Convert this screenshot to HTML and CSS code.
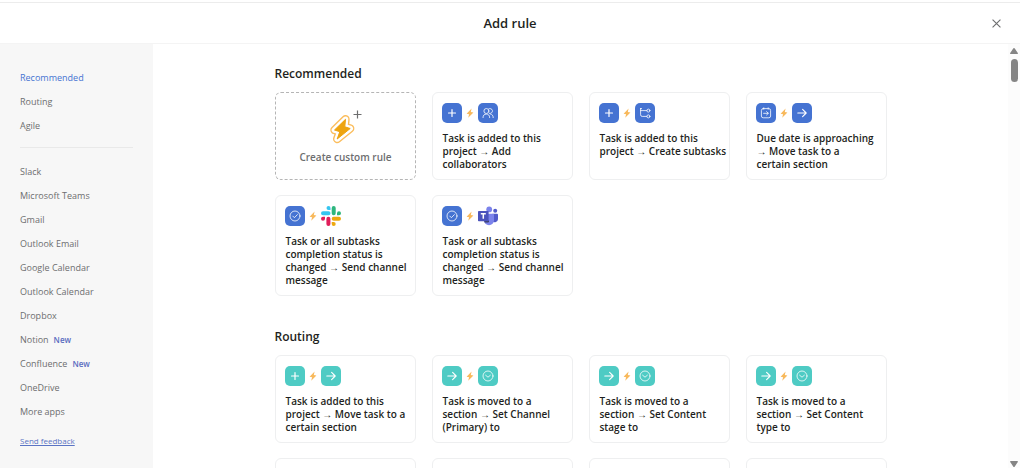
FILE: index.html
```html
<!DOCTYPE html>
<html lang="en">
<head>
<meta charset="utf-8">
<title>Add rule</title>
<link rel="stylesheet" href="styles.css">
</head>
<body>
<svg class="sprite" aria-hidden="true">
  <symbol id="plus" viewBox="0 0 20 20"><path d="M10 6.5v7M6.5 10h7" stroke-width="1.2"/></symbol>
  <symbol id="arrow" viewBox="0 0 20 20"><path d="M5.8 10h8.2M10.6 6.4l3.6 3.6-3.6 3.6" stroke-width="1.1"/></symbol>
  <symbol id="check" viewBox="0 0 20 20"><circle cx="10" cy="10" r="5"/><path d="M7.8 10.1l1.6 1.6 3-3.1"/></symbol>
  <symbol id="chevron" viewBox="0 0 20 20"><circle cx="10" cy="10" r="5"/><path d="M7.6 9.2l2.4 2 2.4-2"/></symbol>
  <symbol id="people" viewBox="0 0 20 20"><circle cx="8.4" cy="8" r="2.5"/><path d="M10.6 5.9a2.5 2.5 0 1 1 .7 4.5M5 14.6c0-2.4 1.3-3.5 3.3-3.5s3.4 1.1 3.4 3.5M12.6 11.1c1.6.2 2.6 1.4 2.6 3.5"/></symbol>
  <symbol id="subtasks" viewBox="0 0 20 20"><path d="M5.6 5.4v6.4q0 1.6 1.6 1.6h4.6M5.6 7.6h6.2M5.6 5.6h1"/><circle cx="13.4" cy="7.6" r="1.5"/><circle cx="13.4" cy="13.4" r="1.5"/></symbol>
  <symbol id="due" viewBox="0 0 20 20"><rect x="5.4" y="5.6" width="9.2" height="9.2" rx="1.8"/><path d="M7.8 4.8v1.4M12.2 4.8v1.4M7.6 10.3h4.6M10.6 8.6l1.7 1.7-1.7 1.7"/></symbol>
  <symbol id="bolt" viewBox="0 0 8 10"><path d="M5.6.5L.6 5.7l2.5.6-.9 3.400 5.200-5.200-2.600-.6z"/></symbol>
  <symbol id="slack" viewBox="0 0 20 20">
    <path fill="#36c5f0" d="M7.5 0a2 2 0 0 0 0 4h2V2a2 2 0 0 0-2-2zM7.5 5.3H2a2 2 0 0 0 0 4h5.5a2 2 0 0 0 0-4z"/>
    <path fill="#2eb67d" d="M20 7.3a2 2 0 0 0-4 0v2h2a2 2 0 0 0 2-2zM14.7 7.3V2a2 2 0 0 0-4 0v5.3a2 2 0 0 0 4 0z"/>
    <path fill="#eda810" d="M12.7 20a2 2 0 0 0 0-4h-2v2a2 2 0 0 0 2 2zM12.7 14.7H18a2 2 0 0 0 0-4h-5.3a2 2 0 0 0 0 4z"/>
    <path fill="#e01e5a" d="M0 12.7a2 2 0 0 0 4 0v-2H2a2 2 0 0 0-2 2zM5.4 12.7V18a2 2 0 0 0 4 0v-5.3a2 2 0 0 0-4 0z"/>
  </symbol>
  <symbol id="teams" viewBox="0 0 20 20">
    <circle cx="17.2" cy="4.8" r="2" fill="#5059c9"/>
    <path fill="#5059c9" d="M14.5 7.8H19q1 0 1 1v4.4a3.2 3.2 0 0 1-5.5 2z"/>
    <circle cx="11.2" cy="3.4" r="2.9" fill="#7b83eb"/>
    <path fill="#7b83eb" d="M7 7.8h8q1 0 1 1v5.4a5 5 0 0 1-10 0V8.8q0-1 1-1z"/>
    <path fill="#3b3f63" d="M6 14.4h5v1.2q0 .8-.8.8H6.6z"/>
    <rect y="5" width="10.6" height="10.2" rx=".8" fill="#4b53bc"/>
    <path fill="none" stroke="#fff" stroke-width="1.5" d="M2.8 7.7h5M5.3 7.7v5"/>
  </symbol>
</svg>

<header class="header">
  <h1 class="title">Add rule</h1>
  <button class="close" aria-label="Close"><svg class="close-icon" viewBox="0 0 8 8"><path d="M.5.5l7 7M7.5.5l-7 7"/></svg></button>
</header>

<div class="body">
  <nav class="sidebar" aria-label="Rule categories">
    <ul class="menu menu-top">
      <li><a class="link active" href="#recommended">Recommended</a></li>
      <li><a class="link" href="#routing">Routing</a></li>
      <li><a class="link" href="#agile">Agile</a></li>
    </ul>
    <ul class="menu">
      <li><a class="link" href="#slack-apps">Slack</a></li>
      <li><a class="link" href="#teams-apps">Microsoft Teams</a></li>
      <li><a class="link" href="#gmail">Gmail</a></li>
      <li><a class="link" href="#outlook-email">Outlook Email</a></li>
      <li><a class="link" href="#google-calendar">Google Calendar</a></li>
      <li><a class="link" href="#outlook-calendar">Outlook Calendar</a></li>
      <li><a class="link" href="#dropbox">Dropbox</a></li>
      <li><a class="link" href="#notion">Notion<span class="new">New</span></a></li>
      <li><a class="link" href="#confluence">Confluence<span class="new">New</span></a></li>
      <li><a class="link" href="#onedrive">OneDrive</a></li>
      <li><a class="link" href="#more">More apps</a></li>
    </ul>
    <a class="feedback" href="#feedback">Send feedback</a>
  </nav>

  <main class="main">
    <section class="section" id="recommended">
      <h2 class="heading">Recommended</h2>
      <div class="grid">
        <button class="card custom">
          <svg class="custom-icon" viewBox="0 0 34 38">
            <path class="halo" d="M17.5 12.3L6.5 23l5.3 1.7L9.2 32l13-10.5-5.4-1.7z"/>
            <path class="gap" d="M17.5 12.3L6.5 23l5.3 1.7L9.2 32l13-10.5-5.4-1.7z"/>
            <path class="flash" d="M17.5 12.3L6.5 23l5.3 1.7L9.2 32l13-10.5-5.4-1.7z"/>
            <path class="add" d="M29.5 3.5v8M25.5 7.5h8"/>
          </svg>
          <span class="custom-label">Create custom rule</span>
        </button>
        <button class="card blue">
          <span class="icons"><svg class="tile"><use href="#plus"/></svg><svg class="bolt"><use href="#bolt"/></svg><svg class="tile"><use href="#people"/></svg></span>
          <span class="text">Task is added to this project → Add collaborators</span>
        </button>
        <button class="card blue">
          <span class="icons"><svg class="tile"><use href="#plus"/></svg><svg class="bolt"><use href="#bolt"/></svg><svg class="tile"><use href="#subtasks"/></svg></span>
          <span class="text">Task is added to this<br>project → Create subtasks</span>
        </button>
        <button class="card blue">
          <span class="icons"><svg class="tile"><use href="#due"/></svg><svg class="bolt"><use href="#bolt"/></svg><svg class="tile"><use href="#arrow"/></svg></span>
          <span class="text">Due date is approaching<br>→ Move task to a<br>certain section</span>
        </button>
        <button class="card blue">
          <span class="icons"><svg class="tile"><use href="#check"/></svg><svg class="bolt"><use href="#bolt"/></svg><svg class="logo"><use href="#slack"/></svg></span>
          <span class="text">Task or all subtasks<br>completion status is changed → Send channel message</span>
        </button>
        <button class="card blue">
          <span class="icons"><svg class="tile"><use href="#check"/></svg><svg class="bolt"><use href="#bolt"/></svg><svg class="logo"><use href="#teams"/></svg></span>
          <span class="text">Task or all subtasks<br>completion status is changed → Send channel message</span>
        </button>
      </div>
    </section>

    <section class="section" id="routing">
      <h2 class="heading">Routing</h2>
      <div class="grid">
        <button class="card teal">
          <span class="icons"><svg class="tile"><use href="#plus"/></svg><svg class="bolt"><use href="#bolt"/></svg><svg class="tile"><use href="#arrow"/></svg></span>
          <span class="text">Task is added to this project → Move task to a certain section</span>
        </button>
        <button class="card teal">
          <span class="icons"><svg class="tile"><use href="#arrow"/></svg><svg class="bolt"><use href="#bolt"/></svg><svg class="tile"><use href="#chevron"/></svg></span>
          <span class="text">Task is moved to a<br>section → Set Channel (Primary) to</span>
        </button>
        <button class="card teal">
          <span class="icons"><svg class="tile"><use href="#arrow"/></svg><svg class="bolt"><use href="#bolt"/></svg><svg class="tile"><use href="#chevron"/></svg></span>
          <span class="text">Task is moved to a<br>section → Set Content<br>stage to</span>
        </button>
        <button class="card teal">
          <span class="icons"><svg class="tile"><use href="#arrow"/></svg><svg class="bolt"><use href="#bolt"/></svg><svg class="tile"><use href="#chevron"/></svg></span>
          <span class="text">Task is moved to a<br>section → Set Content<br>type to</span>
        </button>
        <div class="card"></div>
        <div class="card"></div>
        <div class="card"></div>
        <div class="card"></div>
      </div>
    </section>
  </main>

  <div class="scrollbar" aria-hidden="true">
    <svg class="caret" viewBox="0 0 8 6"><path d="M4 0q.5 0 .8.5L7.8 5q.4 1-.6 1H.8q-1 0-.6-1L3.2.5Q3.5 0 4 0z"/></svg>
    <span class="thumb"></span>
    <svg class="caret down" viewBox="0 0 8 6"><path d="M4 0q.5 0 .8.5L7.8 5q.4 1-.6 1H.8q-1 0-.6-1L3.2.5Q3.5 0 4 0z"/></svg>
  </div>
</div>
</body>
</html>
```
FILE: styles.css
```css
* {
  box-sizing: border-box;
}

body {
  margin: 0;
  height: 100vh;
  display: flex;
  flex-direction: column;
  overflow: hidden;
  background: #fff;
  color: #1e1f21;
  font-family: "Open Sans", "Noto Sans", sans-serif;
  font-size: 10px;
}

button {
  font: inherit;
  color: inherit;
  cursor: pointer;
}

.sprite {
  display: none;
}

.header {
  flex: none;
  display: grid;
  grid-template-columns: 1fr auto 1fr;
  align-items: center;
  margin-top: 2px;
  padding: 10px 19px 10px 0;
  border-top: 1px solid #ececec;
  border-bottom: 1px solid #f4f4f4;
}

.title {
  grid-column: 2;
  margin: 0;
  padding-left: 19px;
  font-size: 13px;
  line-height: 20px;
  font-weight: 600;
}

.close {
  justify-self: end;
  display: flex;
  padding: 0;
  border: 0;
  background: none;
}

.close-icon {
  width: 9px;
  height: 9px;
  fill: none;
  stroke: #6d6e6f;
}

.body {
  flex: 1;
  min-height: 0;
  display: flex;
}

.sidebar {
  flex: 0 0 15%;
  padding: 26px 20px 0;
  background: #f7f7f7;
  overflow: hidden;
}

.menu {
  display: grid;
  gap: 8px;
  margin: 0;
  padding: 0;
  list-style: none;
  line-height: 16px;
}

.menu-top {
  margin-bottom: 16px;
  padding-bottom: 13px;
  border-bottom: 1px solid #e9e9e9;
}

.link {
  display: flex;
  color: #6d6e6f;
  font-size: 9px;
  text-decoration: none;
}

.active {
  color: #4573d2;
}

.new {
  margin-left: 5px;
  color: #5a6cc0;
  font-size: 8px;
  font-weight: 600;
}

.feedback {
  display: inline-block;
  margin-top: 13px;
  color: #5a74c4;
  font-size: 8px;
  line-height: 16px;
}

.main {
  flex: 1;
  min-width: 0;
  padding: 20px 16px 0;
  overflow: hidden;
}

.section {
  max-width: 612px;
  margin: 0 auto 31px;
}

.heading {
  margin: 0 0 8px;
  font-size: 12px;
  line-height: 20px;
  font-weight: 600;
}

.grid {
  display: grid;
  grid-template-columns: repeat(4, minmax(0, 1fr));
  gap: 15px 16px;
}

.card {
  display: flex;
  flex-direction: column;
  gap: 9px;
  min-height: 88px;
  padding: 10px 1px 8px 9px;
  border: 1px solid #eeeff0;
  border-radius: 6px;
  background: #fff;
  text-align: left;
}

.custom {
  align-items: center;
  gap: 6px;
  padding: 14px 9px 8px;
  border: 1px dashed #b5b5b5;
  color: #6d6e6f;
}

.custom-label,
.text {
  padding-left: 1px;
  font-size: 10px;
  line-height: 13px;
  font-weight: 600;
}

.custom-icon {
  width: 34px;
  height: 38px;
}

.halo,
.gap,
.flash {
  stroke-linejoin: round;
}

.halo {
  fill: #fbbd5c;
  stroke: #fbbd5c;
  stroke-width: 8.4;
}

.gap {
  fill: #fff;
  stroke: #fff;
  stroke-width: 5.6;
}

.flash {
  fill: #eea40f;
  stroke: #eea40f;
  stroke-width: 1;
}

.add {
  stroke: #6d6e6f;
  stroke-width: 1.2;
}

.icons {
  display: flex;
  align-items: center;
  gap: 4px;
}

.tile {
  width: 20px;
  height: 20px;
  border-radius: 5px;
  fill: none;
  stroke: #fff;
  stroke-width: 0.8;
  stroke-linecap: round;
  stroke-linejoin: round;
}

.logo {
  width: 20px;
  height: 20px;
}

.blue .tile {
  background: #4573d2;
}

.teal .tile {
  background: #4ecbc4;
}

.bolt {
  width: 8px;
  height: 10px;
  fill: #f8b95c;
}

.scrollbar {
  flex: none;
  display: flex;
  flex-direction: column;
  align-items: center;
  gap: 5px;
  width: 12px;
  padding: 4px 0 1px;
  background: #fcfcfc;
}

.caret {
  width: 8px;
  height: 6px;
  fill: #858585;
}

.thumb {
  width: 7px;
  height: 23px;
  border-radius: 4px;
  background: #858585;
}

.down {
  margin-top: auto;
  transform: rotate(180deg);
}
```
